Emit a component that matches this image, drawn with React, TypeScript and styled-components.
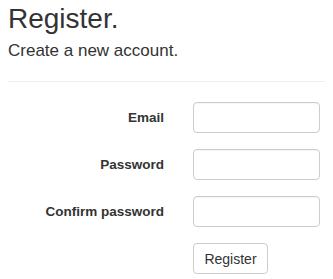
import React from "react";
import styled, { createGlobalStyle } from "styled-components";

const GlobalStyle = createGlobalStyle`
  html, body {
    margin: 0;
    padding: 0;
    background: #fff;
  }
  body {
    font-family: "Liberation Sans", Arial, sans-serif;
    color: #333;
  }
`;

const Page = styled.div`
  padding: 4px 8px 0 8px;
`;

const Title = styled.h2`
  margin: 0;
  font-size: 28px;
  font-weight: 400;
  line-height: 1.05;
`;

const Subtitle = styled.h4`
  margin: 9px 0 0 0;
  font-size: 17px;
  font-weight: 400;
  line-height: 1.1;
`;

const Rule = styled.hr`
  margin: 20px 0 0 0;
  border: 0;
  border-top: 1px solid #eee;
`;

const Form = styled.form`
  margin-top: 20px;
  display: grid;
  grid-template-columns: 156px 127px;
  column-gap: 29px;
  row-gap: 16px;
  align-items: center;
`;

const Label = styled.label`
  font-size: 13.5px;
  font-weight: 700;
  text-align: right;
`;

const Input = styled.input`
  box-sizing: border-box;
  width: 127px;
  height: 31px;
  border: 1px solid #ccc;
  border-radius: 4px;
  padding: 5px 10px;
  font: inherit;
  font-size: 13.5px;
  background: #fff;
  box-shadow: inset 0 1px 1px rgba(0, 0, 0, 0.04);
`;

const Button = styled.button`
  grid-column: 2;
  justify-self: start;
  box-sizing: border-box;
  width: 75px;
  height: 31px;
  border: 1px solid #ccc;
  border-radius: 4px;
  background: #fff;
  color: #333;
  font-family: "Liberation Sans", Arial, sans-serif;
  font-size: 14px;
  padding: 0;
`;

const fields = [
  { id: "Email", label: "Email", type: "email" },
  { id: "Password", label: "Password", type: "password" },
  { id: "ConfirmPassword", label: "Confirm password", type: "password" },
];

export default function App() {
  return (
    <>
      <GlobalStyle />
      <Page>
        <Title>Register.</Title>
        <Subtitle>Create a new account.</Subtitle>
        <Rule />
        <Form onSubmit={e => e.preventDefault()}>
          {fields.map(f => (
            <React.Fragment key={f.id}>
              <Label htmlFor={f.id}>{f.label}</Label>
              <Input id={f.id} type={f.type} />
            </React.Fragment>
          ))}
          <Button type="submit">Register</Button>
        </Form>
      </Page>
    </>
  );
}
